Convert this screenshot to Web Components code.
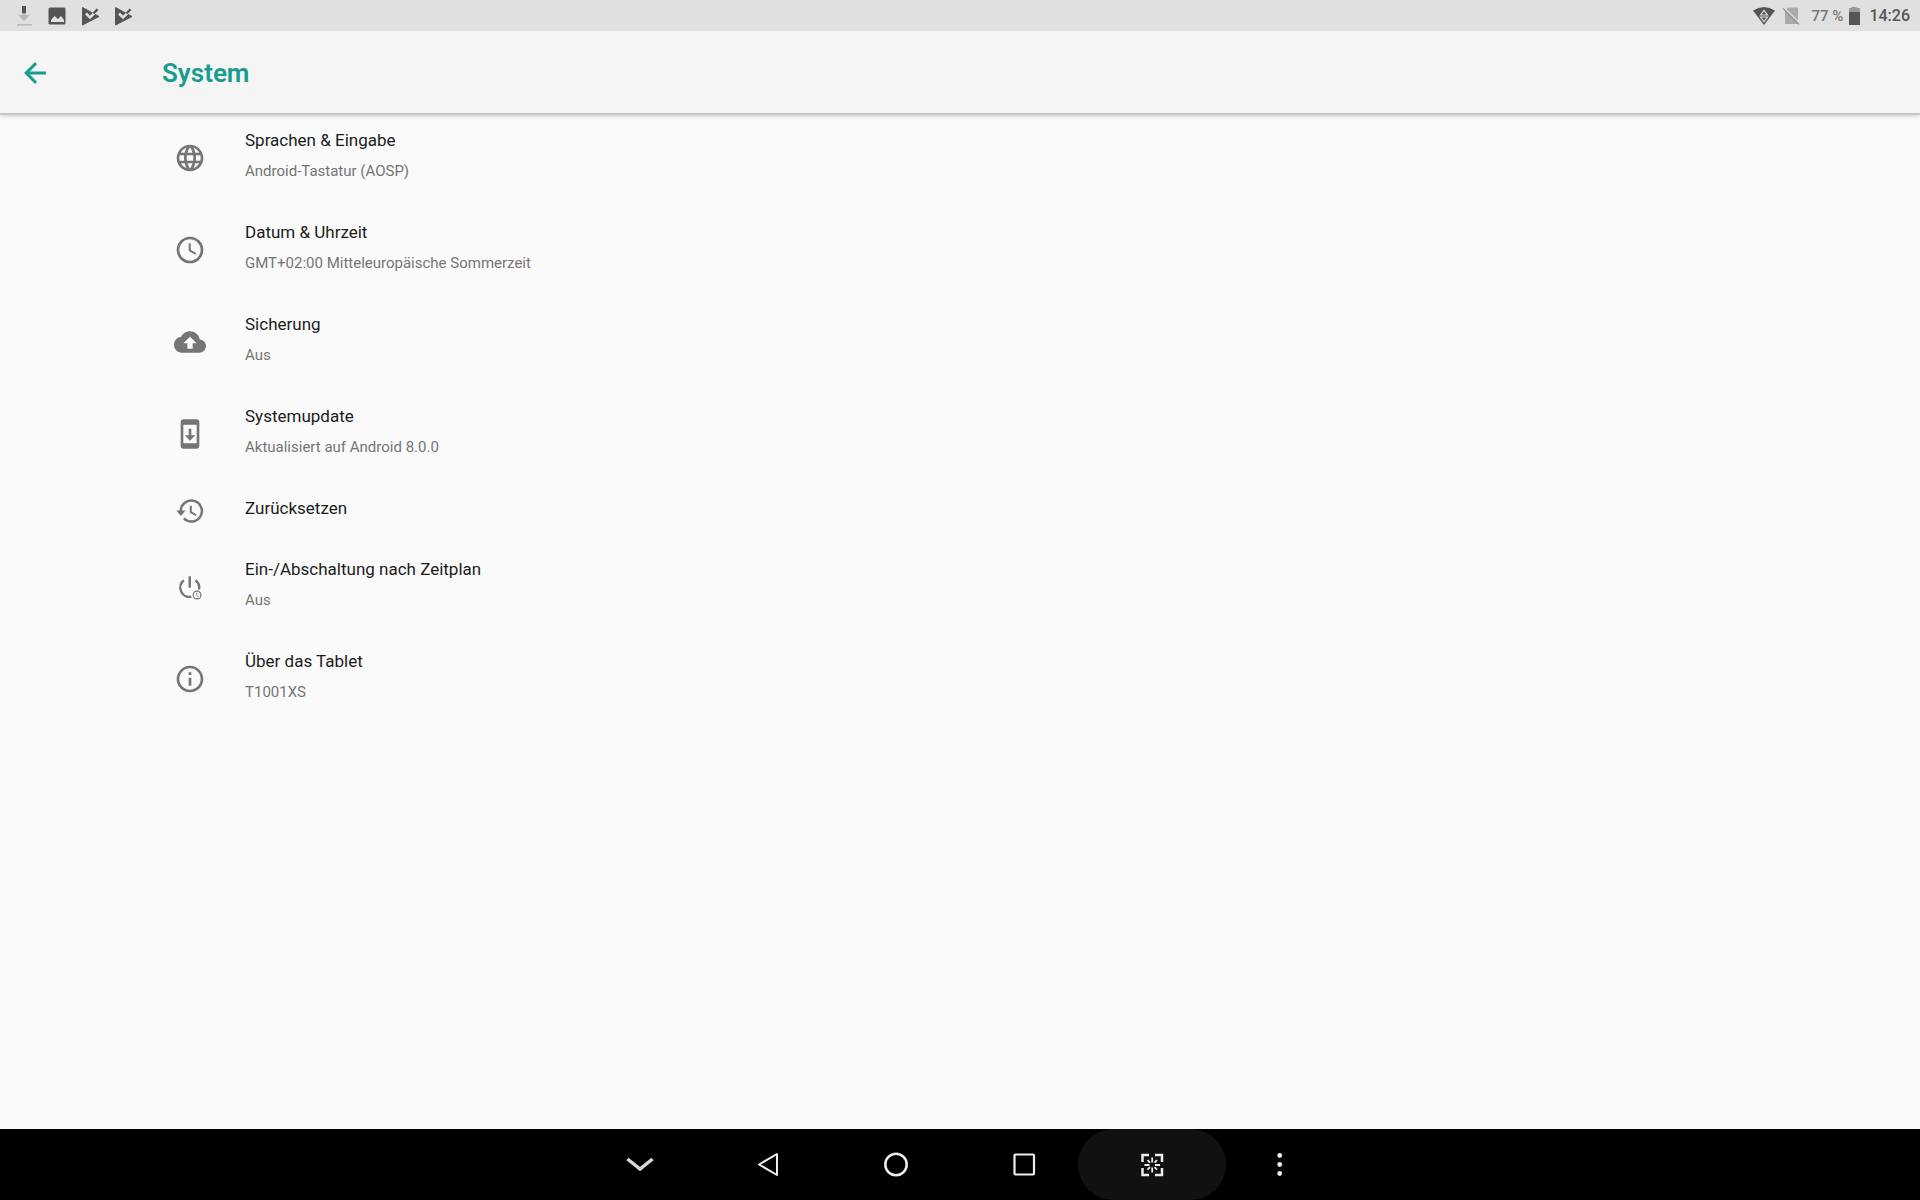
<!DOCTYPE html>
<html lang="de">
<head>
<meta charset="utf-8">
<meta name="viewport" content="width=device-width, initial-scale=1">
<title>System</title>
<style>
    html, body {
        height: 100%;
        margin: 0;
    }
    body {
        background: #fafafa;
        color: #1c1c1c;
        font-family: Roboto, "Noto Sans", sans-serif;
    }
</style>
</head>
<body>
<tablet-screen>
    <status-bar slot="top" charge="77 %" time="14:26"></status-bar>
    <app-header slot="top">System</app-header>
    <setting-item icon="globe">Sprachen &amp; Eingabe<span slot="summary">Android-Tastatur (AOSP)</span></setting-item>
    <setting-item icon="clock">Datum &amp; Uhrzeit<span slot="summary">GMT+02:00 Mitteleuropäische Sommerzeit</span></setting-item>
    <setting-item icon="cloud">Sicherung<span slot="summary">Aus</span></setting-item>
    <setting-item icon="update">Systemupdate<span slot="summary">Aktualisiert auf Android 8.0.0</span></setting-item>
    <setting-item icon="restore">Zurücksetzen</setting-item>
    <setting-item icon="power">Ein-/Abschaltung nach Zeitplan<span slot="summary">Aus</span></setting-item>
    <setting-item icon="info">Über das Tablet<span slot="summary">T1001XS</span></setting-item>
    <nav-bar slot="bottom"></nav-bar>
</tablet-screen>

<script>
const icons = {
    globe: `<path d="M12 2C6.500 2 2 6.500 2 12s4.500 10 10 10 10-4.500 10-10S17.500 2 12 2zm6.900 6h-2.900c-.3-1.300-.8-2.400-1.400-3.600 1.800.7 3.400 1.900 4.300 3.600zM12 4c.8 1.200 1.500 2.500 1.900 4h-3.800c.4-1.500 1.100-2.800 1.900-4zM4.300 14c-.2-.6-.3-1.300-.3-2s.1-1.400.3-2h3.300c-.1.700-.1 1.300-.1 2s.1 1.300.1 2H4.300zm.8 2H8c.3 1.300.8 2.400 1.400 3.600C7.600 18.900 6 17.700 5.100 16zM8 8H5.100C6 6.300 7.600 5.100 9.400 4.400 8.800 5.600 8.300 6.700 8 8zm4 12c-.8-1.200-1.500-2.500-1.900-4h3.800c-.4 1.500-1.100 2.800-1.900 4zm2.300-6H9.700c-.1-.7-.2-1.300-.2-2s.1-1.300.2-2h4.600c.1.700.2 1.300.2 2s-.1 1.300-.2 2zm.3 5.600c.6-1.200 1.100-2.300 1.400-3.600h2.900c-.9 1.700-2.500 2.900-4.300 3.600zm1.800-5.600c.1-.7.100-1.300.100-2s0-1.300-.100-2h3.300c.2.600.3 1.300.3 2s-.1 1.400-.3 2h-3.300z"/>`,
    clock: `<g fill="none" stroke="currentColor"><circle cx="12" cy="12" r="9" stroke-width="2"/><path d="M11.800 7v5.300l4.500 2.600" stroke-width="1.500"/></g>`,
    cloud: `<path d="M19.350 10.040A7.490 7.490 0 0 0 12 4C9.110 4 6.600 5.640 5.350 8.040A5.994 5.994 0 0 0 0 14c0 3.310 2.690 6 6 6h13c2.760 0 5-2.240 5-5 0-2.640-2.050-4.780-4.650-4.960zM14 13v4h-4v-4H7l5-5 5 5h-3z"/>`,
    update: `<path d="M17 1.010 7 1c-1.100 0-2 .9-2 2v18c0 1.100.9 2 2 2h10c1.100 0 2-.9 2-2V3c0-1.100-.9-1.990-2-1.990zM17 19H7V5h10v14zm-1-6h-3V8h-2v5H8l4 4 4-4z"/>`,
    restore: `<g fill="none" stroke="currentColor"><path d="M5.100 12.500A7.900 7.900 0 1 1 7.400 17.600" stroke-width="1.800"/><path d="M12.600 8v4.800l4 2.400" stroke-width="1.500"/></g><path d="M1.700 11.600h7L5.200 15.700z"/>`,
    power: `<g fill="none" stroke="currentColor"><path d="M7.400 6.900A7 7 0 0 0 13 19.300M16.200 6.900A7 7 0 0 1 18.700 13.800M11.800 4v8.500" stroke-width="1.800"/><circle cx="17.300" cy="18" r="2.900" stroke-width=".9"/><path d="M17 16.300v1.900l1.300 1" stroke-width=".7"/></g>`,
    info: `<path d="M11 17h2v-6h-2v6zm1-15C6.480 2 2 6.480 2 12s4.480 10 10 10 10-4.480 10-10S17.520 2 12 2zm0 18c-4.410 0-8-3.590-8-8s3.590-8 8-8 8 3.590 8 8-3.590 8-8 8zM11 9h2V7h-2v2z"/>`,
    back: `<path d="M20 11H7.830l5.590-5.590L12 4l-8 8 8 8 1.410-1.410L7.830 13H20v-2z"/>`
};

class TabletScreen extends HTMLElement {
    constructor() {
        super();
        this.attachShadow({ mode: 'open' }).innerHTML = `
            <style>
                :host {
                    display: flex;
                    flex-direction: column;
                    min-height: 100%;
                }
                main {
                    flex: 1;
                    margin-top: -1px;
                }
            </style>
            <slot name="top"></slot>
            <main><slot></slot></main>
            <slot name="bottom"></slot>
        `;
    }
}

class StatusBar extends HTMLElement {
    connectedCallback() {
        const play = `
            <svg viewBox="0 0 24 24">
                <path d="M4.500 3.500 21 12.500 4.500 21z" stroke="#555" stroke-linejoin="round"/>
                <path d="M8 9.500l4 4L21 4.500" fill="none" stroke="#e0e0e0" stroke-width="2.500"/>
                <path d="M14.500 9l4-4.500 2 1.500-4 4z"/>
            </svg>`;
        this.attachShadow({ mode: 'open' }).innerHTML = `
            <style>
                :host {
                    display: flex;
                    align-items: center;
                    justify-content: space-between;
                    height: 31px;
                    padding: 0 10px 0 12px;
                    background: #e0e0e0;
                    color: #555;
                    font-size: 16px;
                    font-weight: 500;
                    line-height: 20px;
                }
                div {
                    display: flex;
                    align-items: center;
                }
                .notifications {
                    gap: 9px;
                }
                svg {
                    width: 24px;
                    height: 24px;
                    fill: #555;
                }
                .wifi {
                    margin-right: 6px;
                }
                .sim {
                    width: 18px;
                }
                .charge {
                    margin: 0 5px 0 12px;
                    color: #777;
                    font-size: 15px;
                }
                .battery {
                    width: 12px;
                    margin-right: 9px;
                }
            </style>
            <div class="notifications">
                <svg viewBox="0 0 24 24"><path d="M10 2h4v7h-4z"/><path d="M10 9h4v2h4l-6 6-6-6h4z" fill="#b8b8b8"/><path d="M5 20h15v1.500H5z" fill="#bbb"/></svg>
                <svg viewBox="0 0 24 24"><path fill-rule="evenodd" d="M5 3.500h14a1.500 1.500 0 0 1 1.500 1.500v14a1.500 1.500 0 0 1-1.500 1.500H5A1.500 1.500 0 0 1 3.500 19V5A1.500 1.500 0 0 1 5 3.500zM6 18h13v-2l-3-4-3 3-3.500-3L6 16z"/></svg>
                ${play}
                ${play}
            </div>
            <div>
                <svg class="wifi" viewBox="0 0 24 24"><path d="M1 6.500q11-7 22 0L12 21z"/><path d="M8.500 11 12 6.500l3.500 4.500zM8.500 13h7L12 17.500z" fill="none" stroke="#e0e0e0" stroke-width="1.200"/></svg>
                <svg class="sim" viewBox="0 0 18 24"><path d="M6 3.500h10V20H3V6.500z" fill="#aaa"/><path d="M2 3.500 18 19.500" stroke="#e0e0e0" stroke-width="1.500"/><path d="M1 4.500 17 20.500" stroke="#999" stroke-width="1.500"/></svg>
                <span class="charge"></span>
                <svg class="battery" viewBox="0 0 12 24"><path d="M1 4h2.500V3h5v1H12v4H1z" fill="#999"/><path d="M1 8h11v13H1z"/></svg>
                <time></time>
            </div>
        `;
        this.shadowRoot.querySelector('.charge').textContent = this.getAttribute('charge');
        this.shadowRoot.querySelector('time').textContent = this.getAttribute('time');
    }
}

class AppHeader extends HTMLElement {
    constructor() {
        super();
        this.attachShadow({ mode: 'open' }).innerHTML = `
            <style>
                :host {
                    display: flex;
                    align-items: center;
                    position: relative;
                    z-index: 1;
                    box-sizing: border-box;
                    height: 82px;
                    padding-top: 2px;
                    background: #f5f5f5;
                    box-shadow: 0 2px 0 #c8c8c8, 0 3px 4px #ccc;
                    color: #179c8e;
                }
                button {
                    display: flex;
                    margin: 0 91px 0 0;
                    padding: 20px 20px 20px 19px;
                    border: 0;
                    background: none;
                    color: inherit;
                }
                svg {
                    width: 32px;
                    height: 32px;
                    fill: currentColor;
                    stroke: currentColor;
                    stroke-width: .3;
                }
                h1 {
                    margin: 0;
                    font-size: 26px;
                    font-weight: 600;
                    line-height: 32px;
                }
            </style>
            <button type="button" aria-label="Zurück"><svg viewBox="0 0 24 24">${icons.back}</svg></button>
            <h1><slot></slot></h1>
        `;
    }
}

class SettingItem extends HTMLElement {
    connectedCallback() {
        this.attachShadow({ mode: 'open' }).innerHTML = `
            <style>
                :host {
                    display: block;
                }
                button {
                    display: flex;
                    align-items: center;
                    gap: 39px;
                    width: 100%;
                    margin: 0;
                    padding: 0 174px;
                    border: 0;
                    background: none;
                    color: inherit;
                    font: inherit;
                    text-align: left;
                }
                svg {
                    width: 32px;
                    height: 32px;
                    fill: currentColor;
                    color: #757575;
                }
                .text {
                    display: flex;
                    flex-direction: column;
                    gap: 7px;
                    padding: 16px 0 21px;
                    font-size: 17px;
                    line-height: 24px;
                }
                ::slotted(span) {
                    color: #757575;
                    font-size: 15px;
                }
            </style>
            <button type="button">
                <svg viewBox="0 0 24 24" aria-hidden="true">${icons[this.getAttribute('icon')]}</svg>
                <span class="text"><span><slot></slot></span><slot name="summary"></slot></span>
            </button>
        `;
    }
}

class NavBar extends HTMLElement {
    constructor() {
        super();
        this.attachShadow({ mode: 'open' }).innerHTML = `
            <style>
                :host {
                    display: flex;
                    justify-content: center;
                    height: 71px;
                    background: #000;
                }
                button {
                    display: flex;
                    align-items: center;
                    justify-content: center;
                    width: 128px;
                    padding: 0 0 1px;
                    border: 0;
                    background: none;
                    color: #eee;
                }
                .pressed {
                    width: 148px;
                    margin: 0 -10px;
                    border-radius: 36px;
                    background: #111;
                }
                svg {
                    width: 32px;
                    height: 32px;
                    fill: none;
                    stroke: currentColor;
                    stroke-width: 2.500;
                }
            </style>
            <button type="button" aria-label="Leiste ausblenden"><svg viewBox="0 0 32 32"><path d="M3.500 11 16 21 28.500 11" stroke="#d8d8d8" stroke-width="3.500"/></svg></button>
            <button type="button" aria-label="Zurück"><svg viewBox="0 0 32 32"><path d="M7 16.500 25 6v21z" stroke-width="2" stroke-linejoin="round"/></svg></button>
            <button type="button" aria-label="Startseite"><svg viewBox="0 0 32 32"><circle cx="16" cy="16.500" r="10.700"/></svg></button>
            <button type="button" aria-label="Übersicht"><svg viewBox="0 0 32 32"><rect x="6.500" y="6.500" width="19.500" height="20" rx="1" stroke-width="2.200"/></svg></button>
            <button type="button" class="pressed" aria-label="Bildschirmfoto"><svg viewBox="0 0 32 32"><path d="M6.500 14V7H13M19 7h7v7M26 20v7h-7M13 27H6.500v-7"/><path d="M16.200 9.500v5M16.200 19.500v5M8.500 17h5M19 17h5M11.500 12.200l2.500 2.500M18.500 19.200l2.500 2.500M21 12.200l-2.500 2.500M14 19.200l-2.500 2.500" stroke-width="1.800"/></svg></button>
            <button type="button" aria-label="Mehr"><svg viewBox="0 0 32 32"><g fill="currentColor" stroke="none"><circle cx="15.700" cy="7.500" r="2.400"/><circle cx="15.700" cy="16.500" r="2.400"/><circle cx="15.700" cy="25.500" r="2.400"/></g></svg></button>
        `;
    }
}

customElements.define('tablet-screen', TabletScreen);
customElements.define('status-bar', StatusBar);
customElements.define('app-header', AppHeader);
customElements.define('setting-item', SettingItem);
customElements.define('nav-bar', NavBar);
</script>
</body>
</html>
